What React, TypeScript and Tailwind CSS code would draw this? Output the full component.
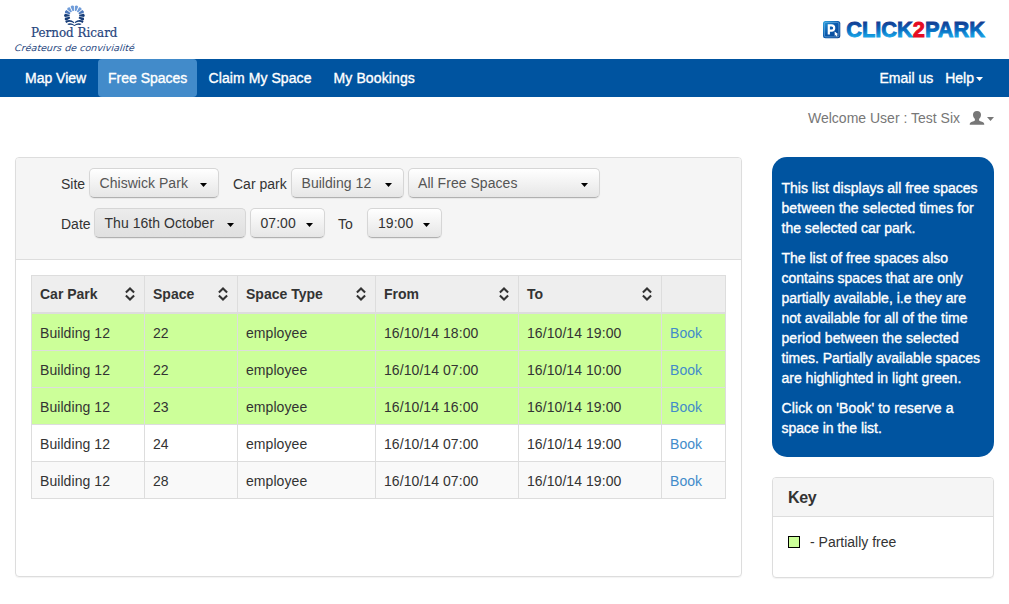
import React from "react";

const font = "font-['Liberation_Sans',Arial,sans-serif]";

function Caret({ className = "" }: { className?: string }) {
  return (
    <svg width="7" height="4" viewBox="0 0 7 4" className={"shrink-0 " + className}>
      <path d="M0 0H7L3.5 4Z" fill="currentColor" />
    </svg>
  );
}

function CompanyLogo() {
  const rays = [-112, -88, -64, -39, -13, 13, 39, 64, 88, 112];
  return (
    <svg width="140" height="59" viewBox="0 0 140 59" className="block">
      <g transform="translate(74.4 15.7)">
        {rays.map((a) => (
          <path
            key={a}
            d="M-0.7 -4.8L-1.7 -9.6Q0 -11.2 1.7 -9.6L0.7 -4.8Z"
            transform={`rotate(${a})`}
            fill={Math.abs(a) < 60 ? "#6f9cd9" : Math.abs(a) < 80 ? "#4a76ba" : "#173d78"}
          />
        ))}
        <path d="M-9.2 5.6Q-4.5 2.6 -0.4 6.2L-0.4 7.6Q-4 4.6 -8.2 7.2Z" fill="#173d78" />
        <path d="M9.2 5.6Q4.5 2.6 0.4 6.2L0.4 7.6Q4 4.6 8.2 7.2Z" fill="#173d78" />
        <path d="M-7.2 8.3Q-3.6 6.4 0 9.2Q3.6 6.4 7.2 8.3L5.6 9.4Q3 8.6 0 10.2Q-3 8.6 -5.6 9.4Z" fill="#173d78" />
      </g>
      <text
        x="31" y="37" textLength="86.5" lengthAdjust="spacingAndGlyphs"
        fontFamily="'DejaVu Serif', serif" fontSize="12.2" fill="#27457d" stroke="#27457d" strokeWidth="0.2"
      >
        Pernod Ricard
      </text>
      <text
        x="0" y="0" textLength="120" lengthAdjust="spacingAndGlyphs" transform="translate(14.5 51) skewX(-6)"
        fontFamily="'DejaVu Sans', sans-serif" fontStyle="italic" fontWeight="200" fontSize="9" fill="#2b4a82"
      >
        Créateurs de convivialité
      </text>
    </svg>
  );
}

function ProductLogo() {
  return (
    <svg width="166" height="24" viewBox="822 18 166 24" className="block">
      <defs>
        <linearGradient id="brand" gradientUnits="userSpaceOnUse" x1="0" y1="21" x2="0" y2="38">
          <stop offset="0.1" stopColor="#123f94" />
          <stop offset="0.5" stopColor="#0867bd" />
          <stop offset="0.9" stopColor="#16a0e3" />
        </linearGradient>
        <linearGradient id="badge" x1="0" y1="0" x2="1" y2="1">
          <stop offset="0" stopColor="#28a3e0" />
          <stop offset="0.45" stopColor="#0a5aae" />
          <stop offset="1" stopColor="#0a3f8c" />
        </linearGradient>
      </defs>
      <rect x="823" y="21" width="17.3" height="17.3" rx="2.5" fill="url(#badge)" />
      <rect x="824.4" y="22.4" width="14.5" height="14.5" rx="1.5" fill="none" stroke="#7db8e4" strokeWidth="0.6" />
      <path d="M828.8 34.6V25.4H831.6A2.5 2.5 0 0 1 831.6 30.6H828.8" fill="none" stroke="#fff" strokeWidth="2.2" />
      <path d="M834.6 31.6L838.3 34.2L836.8 34.6L837.6 36.2L836.6 36.6L835.8 35L834.8 36Z" fill="#fff" />
      <text
        x="846.2" y="37.2" textLength="138.8" lengthAdjust="spacingAndGlyphs"
        fontFamily="'Liberation Sans', Arial, sans-serif" fontWeight="700" fontSize="22" strokeWidth="0.9"
        fill="url(#brand)" stroke="url(#brand)"
      >
        CLICK<tspan fill="#e50b22" stroke="#e50b22">2</tspan>PARK
      </text>
    </svg>
  );
}

function Select({ label, className }: { label: string; className: string }) {
  return (
    <button
      className={
        "flex h-[30px] shrink-0 items-center justify-between rounded-[5px] border border-[#d6d6d6] border-b-[#b0b0b0] pr-[11.5px] pb-px text-left tracking-[0.04px] whitespace-nowrap shadow-[0_1px_1px_rgba(0,0,0,0.06)] " +
        className
      }
    >
      <span>{label}</span>
      <Caret className="mt-[5px] text-black" />
    </button>
  );
}

const light = "bg-linear-to-b from-white to-[#e6e6e6]";

function SortIcon() {
  return (
    <svg width="10" height="14" viewBox="0 0 10 14" className="mr-[9.5px] shrink-0">
      <path d="M0.9 5.4L5 1.5L9.1 5.4M0.9 8.6L5 12.5L9.1 8.6" fill="none" stroke="#333" strokeWidth="2.1" />
    </svg>
  );
}

const columns = ["Car Park", "Space", "Space Type", "From", "To"];
const rows = [
  { space: "22", from: "16/10/14 18:00", to: "16/10/14 19:00", bg: "bg-[#ccff99]" },
  { space: "22", from: "16/10/14 07:00", to: "16/10/14 10:00", bg: "bg-[#ccff99]" },
  { space: "23", from: "16/10/14 16:00", to: "16/10/14 19:00", bg: "bg-[#ccff99]" },
  { space: "24", from: "16/10/14 07:00", to: "16/10/14 19:00", bg: "bg-white" },
  { space: "28", from: "16/10/14 07:00", to: "16/10/14 19:00", bg: "bg-[#f9f9f9]" },
];
const grid = "grid grid-cols-[113px_93px_138px_143px_143px_64px]";
const cell = "flex items-center border-r border-b border-[#ddd] pl-2";
const bodyCell = cell + " pt-[2px] tracking-[0.07px]";

export default function App() {
  return (
    <div className={font + " h-[604px] w-[1009px] overflow-hidden bg-white text-[14px] leading-5 text-[#333]"}>
      <header className="flex h-[59px] justify-between">
        <CompanyLogo />
        <div className="pt-[18px] pr-[21px]">
          <ProductLogo />
        </div>
      </header>

      <nav className="flex h-[38px] items-center bg-[#0054a0] text-white [-webkit-text-stroke:0.35px_white]">
        <a className="ml-[15px] w-[83px] pl-[10px] whitespace-nowrap">Map View</a>
        <a className="flex h-[38px] w-[99px] items-center rounded bg-[#428bca] pl-[10px] whitespace-nowrap">Free Spaces</a>
        <a className="w-[125px] pl-[11.5px] tracking-[0.08px] whitespace-nowrap">Claim My Space</a>
        <a className="pl-[11.5px] tracking-[0.12px] whitespace-nowrap">My Bookings</a>
        <a className="ml-auto pr-3 whitespace-nowrap">Email us</a>
        <a className="flex items-center pr-[26px]">
          Help
          <Caret className="mt-[2px] ml-[2px]" />
        </a>
      </nav>

      <div className="flex h-[60px] items-start justify-end pt-[11px] pr-[15px] text-[#777]">
        <span className="whitespace-nowrap">Welcome User : Test Six</span>
        <svg width="16" height="14" viewBox="0 0 16 14" className="mt-[3px] ml-[9px]">
          <path
            d="M8 0C10.6 0 12 1.5 12 3.8C12 5.7 11.2 7 10.1 7.9V9.1C10.1 9.8 10.6 10 11.4 10.3L13.6 11.1C14.8 11.6 15.3 12.4 15.3 13.8H.7C.7 12.4 1.2 11.6 2.4 11.1L4.6 10.3C5.4 10 5.9 9.8 5.9 9.1V7.9C4.8 7 4 5.7 4 3.8C4 1.5 5.4 0 8 0Z"
            fill="#777"
          />
        </svg>
        <Caret className="mt-[9px] ml-[2px]" />
      </div>

      <main className="flex items-start gap-[30px] pl-[15px]">
        <section className="h-[420px] w-[727px] rounded border border-[#ddd] shadow-[0_1px_1px_rgba(0,0,0,0.05)]">
          <div className="h-[102px] rounded-t-[3px] border-b border-[#ddd] bg-[#f5f5f5] pt-[10px] pl-[45px]">
            <div className="flex h-10 items-start">
              <label className="w-[28px] pt-[6px]">Site</label>
              <Select label="Chiswick Park" className={light + " w-[130px] pl-[9.5px] text-[#555]"} />
              <label className="ml-[14px] w-[58px] pt-[6px] whitespace-nowrap">Car park</label>
              <Select label="Building 12" className={light + " w-[113px] pl-[9.5px] text-[#555]"} />
              <Select label="All Free Spaces" className={light + " ml-1 w-[192px] pl-[9px] text-[#555]"} />
            </div>
            <div className="flex items-start">
              <label className="w-[33px] pt-[6px]">Date</label>
              <Select label="Thu 16th October" className="w-[152px] bg-linear-to-b from-[#ececec] to-[#e0e0e0] pl-[9.5px]" />
              <Select label="07:00" className={light + " ml-1 w-[75px] pl-[9.5px]"} />
              <label className="ml-[13px] w-[29px] pt-[6px]">To</label>
              <Select label="19:00" className={light + " w-[75px] pl-[10px]"} />
            </div>
          </div>

          <div className="mt-[15px] ml-[15px] w-[695px] border-t border-l border-[#ddd]">
            <div className={grid + " h-[38px] bg-[#eee] font-bold"}>
              {columns.map((c) => (
                <div key={c} className={cell + " justify-between border-b-2"}>
                  {c}
                  <SortIcon />
                </div>
              ))}
              <div className={cell + " border-b-2"} />
            </div>
            {rows.map((r, i) => (
              <div key={i} className={grid + " h-[37px] " + r.bg}>
                <div className={bodyCell}>Building 12</div>
                <div className={bodyCell}>{r.space}</div>
                <div className={bodyCell}>employee</div>
                <div className={bodyCell}>{r.from}</div>
                <div className={bodyCell}>{r.to}</div>
                <div className={bodyCell + " text-[#428bca]"}>Book</div>
              </div>
            ))}
          </div>
        </section>

        <aside className="flex w-[222px] flex-col gap-5">
          <div className="flex h-[300px] flex-col gap-[10px] rounded-[15px] bg-[#0054a0] pt-[21px] pl-[9.5px] whitespace-nowrap text-white [-webkit-text-stroke:0.35px_white]">
            <p>This list displays all free spaces<br /><span className="tracking-[0.08px]">between the selected times for</span><br />the selected car park.</p>
            <p>The list of free spaces also<br />contains spaces that are only<br />partially available, i.e they are<br />not available for all of the time<br /><span className="tracking-[0.08px]">period between the selected</span><br />times. Partially available spaces<br />are highlighted in light green.</p>
            <p><span className="tracking-[0.12px]">Click on 'Book' to reserve a</span><br />space in the list.</p>
          </div>
          <div className="h-[101px] rounded border border-[#ddd] shadow-[0_1px_1px_rgba(0,0,0,0.05)]">
            <h3 className="flex h-[39px] items-center rounded-t-[3px] border-b border-[#ddd] bg-[#f5f5f5] pt-[2px] pl-[15px] text-[16px] font-bold tracking-[-0.4px]">Key</h3>
            <div className="flex items-center pt-[15px] pl-[15px]">
              <span className="h-3 w-3 border border-black bg-[#ccff99]" />
              <span className="ml-[10px]">- Partially free</span>
            </div>
          </div>
        </aside>
      </main>
    </div>
  );
}
